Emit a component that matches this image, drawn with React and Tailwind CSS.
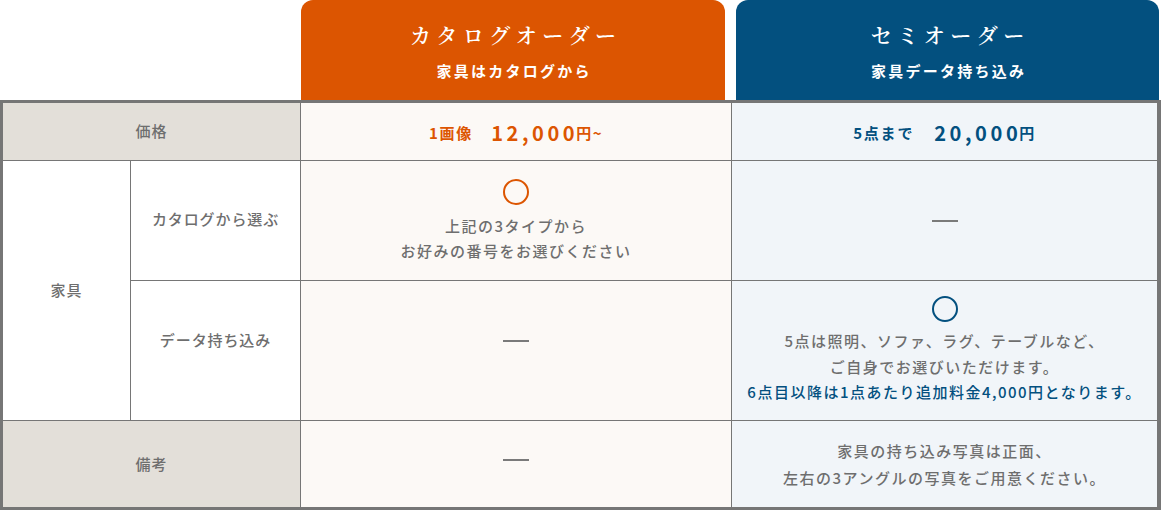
import React from "react";

const font = { fontFamily: '"Noto Sans CJK JP", "Noto Sans", sans-serif' };
const serif = { fontFamily: '"Noto Serif CJK JP", "Noto Sans CJK JP", serif' };

function Circle({ color }) {
  return (
    <div
      className={`h-[26px] w-[26px] rounded-full border-2 ${color === "orange" ? "border-[#dc5501]" : "border-[#03507f]"}`}
    />
  );
}

function Dash() {
  return <div className="h-[2px] w-[26px] bg-[#7a7a7a]" />;
}

export default function App() {
  return (
    <div className="w-[1161px] bg-white" style={font}>
      {/* plan tabs */}
      <div className="flex h-[100px]">
        <div className="w-[301px] shrink-0" />
        <div className="flex w-[424px] flex-col items-center rounded-t-[12px] bg-[#dc5501] pt-[18px] text-white">
          <div className="pl-[0.26em] text-[21px] font-semibold leading-[32px] tracking-[0.26em]" style={serif}>
            カタログオーダー
          </div>
          <div className="mt-[11px] pl-[0.15em] text-[15px] font-bold leading-[20px] tracking-[0.15em]">
            家具はカタログから
          </div>
        </div>
        <div className="ml-[11px] flex w-[423px] flex-col items-center rounded-t-[12px] bg-[#03507f] pt-[18px] text-white">
          <div className="pl-[0.26em] text-[21px] font-semibold leading-[32px] tracking-[0.26em]" style={serif}>
            セミオーダー
          </div>
          <div className="mt-[11px] pl-[0.15em] text-[15px] font-bold leading-[20px] tracking-[0.15em]">
            家具データ持ち込み
          </div>
        </div>
      </div>

      {/* comparison table */}
      <div className="grid grid-cols-[127px_169px_430px_425px] grid-rows-[57px_119px_139px_86px] gap-px border-t-[3px] border-l-[3px] border-r-4 border-b-[3px] border-[#767676] bg-[#767676] text-[15px] font-medium tracking-[0.1em] text-[#6e6e6e]">
        {/* 価格 */}
        <div className="col-span-2 flex items-center justify-center bg-[#e3dfd9] tracking-[0.06em]">価格</div>
        <div className="flex items-center justify-center bg-[#fcf9f6] pt-[3px] font-bold text-[#dc5501]">
          <span className="tracking-[0.12em]">1画像</span>
          <span className="ml-[18px] text-[20px] tracking-[0.18em]">12,000</span>
          <span className="-ml-[2px]">円~</span>
        </div>
        <div className="flex items-center justify-center bg-[#f1f5f9] pt-[3px] font-bold text-[#03507f]">
          <span className="tracking-[0.12em]">5点まで</span>
          <span className="ml-[20px] text-[20px] tracking-[0.18em]">20,000</span>
          <span className="-ml-[2px]">円</span>
        </div>

        {/* 家具 */}
        <div className="row-span-2 flex items-center justify-center bg-white tracking-[0.06em]">家具</div>
        <div className="flex items-center justify-center bg-white pb-[2px] tracking-[0.06em]">カタログから選ぶ</div>
        <div className="flex flex-col items-center justify-center bg-[#fcf9f6] leading-[25px]">
          <Circle color="orange" />
          <div className="mt-[8px] text-center">
            上記の3タイプから
            <br />
            お好みの番号をお選びください
          </div>
        </div>
        <div className="flex items-center justify-center bg-[#f1f5f9]">
          <Dash />
        </div>

        <div className="flex items-center justify-center bg-white pb-[20px] tracking-[0.06em]">データ持ち込み</div>
        <div className="flex items-center justify-center bg-[#fcf9f6] pb-[20px]">
          <Dash />
        </div>
        <div className="flex flex-col items-center justify-center bg-[#f1f5f9] leading-[25.5px]">
          <Circle color="blue" />
          <div className="mt-[6px] text-center">
            5点は照明、ソファ、ラグ、テーブルなど、
            <br />
            ご自身でお選びいただけます。
            <br />
            <span className="text-[#03507f]">
              6点目以降は1点あたり追加料金4,000円となります。
            </span>
          </div>
        </div>

        {/* 備考 */}
        <div className="col-span-2 flex items-center justify-center bg-[#e3dfd9] tracking-[0.06em]">備考</div>
        <div className="flex items-center justify-center bg-[#fcf9f6] pb-[8px]">
          <Dash />
        </div>
        <div className="flex items-center justify-center bg-[#f1f5f9] text-center leading-[27px]">
          <div>
            家具の持ち込み写真は正面、
            <br />
            左右の3アングルの写真をご用意ください。
          </div>
        </div>
      </div>
    </div>
  );
}
